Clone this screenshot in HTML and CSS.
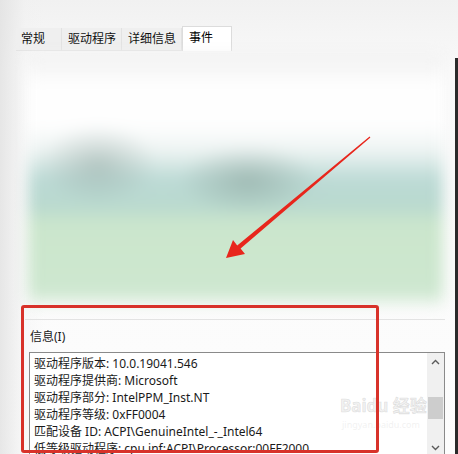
FILE: index.html
```html
<!DOCTYPE html>
<html lang="zh-CN">
<head>
    <meta charset="UTF-8">
    <title>属性 - 事件</title>
    <link rel="stylesheet" href="styles.css">
</head>
<body>
    <div class="window">
        <div class="tabs">
            <div class="tab tab-first">常规</div>
            <div class="tab">驱动程序</div>
            <div class="tab">详细信息</div>
            <div class="tab active">事件</div>
        </div>

        <div class="preview"></div>

        <div class="info">
            <div class="label">信息(I)</div>
            <div class="textbox">
                <div class="lines">
                    <div>驱动程序版本: 10.0.19041.546</div>
                    <div>驱动程序提供商: Microsoft</div>
                    <div>驱动程序部分: IntelPPM_Inst.NT</div>
                    <div>驱动程序等级: 0xFF0004</div>
                    <div>匹配设备 ID: ACPI\GenuineIntel_-_Intel64</div>
                    <div>低等级驱动程序: cpu.inf:ACPI\Processor:00FF2000</div>
                </div>
                <div class="scrollbar">
                    <svg class="arrow" width="9" height="6" viewBox="0 0 9 6"><path d="M1 5 L4.5 1.5 L8 5" fill="none" stroke="#5a5a5a" stroke-width="1.4"/></svg>
                    <span class="thumb"></span>
                    <svg class="arrow down" width="9" height="6" viewBox="0 0 9 6"><path d="M1 1 L4.5 4.5 L8 1" fill="none" stroke="#5a5a5a" stroke-width="1.4"/></svg>
                </div>
            </div>
        </div>

        <div class="watermark">
            <span class="wm-big">Baidu 经验</span>
            <span class="wm-small">jingyan.baidu.com</span>
        </div>

        <div class="highlight"></div>

        <svg class="pointer" width="458" height="454" viewBox="0 0 458 454">
            <polygon fill="#e8261c" points="226,258 245,254 240.6,248.6 370.4,137.6 369.6,136.4 237.2,245.4 233,240"/>
        </svg>
    </div>
</body>
</html>
```

FILE: styles.css
```css
* {
    margin: 0;
    padding: 0;
    box-sizing: border-box;
}

body {
    font-family: 'Noto Sans', 'Noto Sans CJK SC', sans-serif;
    font-size: 12px;
    color: #1a1a1a;
    background: #fff;
}

.window {
    position: relative;
    width: 458px;
    height: 454px;
    overflow: hidden;
    padding-right: 3px;
    background:
        linear-gradient(90deg, rgba(225, 225, 225, 0.8) 0px, rgba(240, 240, 240, 0.3) 25px, transparent 45px),
        linear-gradient(180deg, #f1f1f1 0%, #f9f9f9 15%, #fdfdfd 100%);
}

/* window edge on the right */
.window::after {
    content: '';
    position: absolute;
    right: 0;
    top: 58px;
    bottom: 0;
    width: 3px;
    background: #2b2b2b;
}

.tabs {
    display: flex;
    align-items: flex-end;
    padding: 26px 0 0 16px;
    height: 51px;
}

.tab {
    height: 23px;
    line-height: 22px;
    padding-left: 6px;
    width: 60px;
    background: #efefef;
    border-right: 1px solid #e2e2e2;
    border-bottom: 1px solid #e4e4e4;
    color: #111;
}

.tab-first {
    width: 46px;
    padding-left: 5px;
}

.tab.active {
    width: 50px;
    height: 25px;
    background: #fff;
    border: 1px solid #dcdcdc;
    border-bottom: none;
    color: #000;
}

.preview {
    height: 250px;
    margin: 4px 12px 0 28px;
    background:
        radial-gradient(ellipse 60px 40px at 70px 110px, rgba(150, 170, 165, 0.55), transparent),
        radial-gradient(ellipse 70px 35px at 220px 125px, rgba(140, 165, 158, 0.6), transparent),
        linear-gradient(180deg, #f0f0f0 0px, #fefefe 30px, #fefefe 70px, #eef4f3 95px, #bcdad5 125px, #b9d9cf 150px, #cbe6cc 170px, #cde7cf 235px, #e9f3ea 250px);
    filter: blur(7px);
}

.info {
    margin: 14px 10px 0 25px;
    padding-left: 4px;
    border-top: 1px solid #e3e3e3;
}

.label {
    height: 32px;
    line-height: 18px;
    padding-top: 8px;
    padding-left: 1px;
}

.textbox {
    display: flex;
    height: 110px;
    background: #fff;
    border: 1px solid #8a8a8a;
}

.lines {
    flex: 1;
    padding: 2px 0 0 4px;
    line-height: 17px;
    white-space: nowrap;
    overflow: hidden;
}

.scrollbar {
    width: 17px;
    background: #f0f0f0;
    display: flex;
    flex-direction: column;
    align-items: center;
}

.arrow {
    margin-top: 6px;
}

.arrow.down {
    margin-top: 26px;
}

.thumb {
    width: 15px;
    height: 22px;
    margin-top: 32px;
    background: #cdcdcd;
}

.watermark {
    position: absolute;
    left: 340px;
    top: 394px;
    display: flex;
    flex-direction: column;
    color: rgba(215, 215, 215, 0.35);
    -webkit-text-stroke: 0.6px rgba(170, 170, 170, 0.35);
}

.wm-big {
    font-size: 17px;
    line-height: 24px;
    font-weight: 700;
}

.wm-small {
    font-size: 9px;
    line-height: 14px;
    padding-left: 2px;
    -webkit-text-stroke: 0;
}

.highlight {
    position: absolute;
    left: 21px;
    top: 305px;
    width: 358px;
    height: 148px;
    border: 3px solid #d8322a;
    border-radius: 3px;
}

.pointer {
    position: absolute;
    left: 0;
    top: 0;
}
```
